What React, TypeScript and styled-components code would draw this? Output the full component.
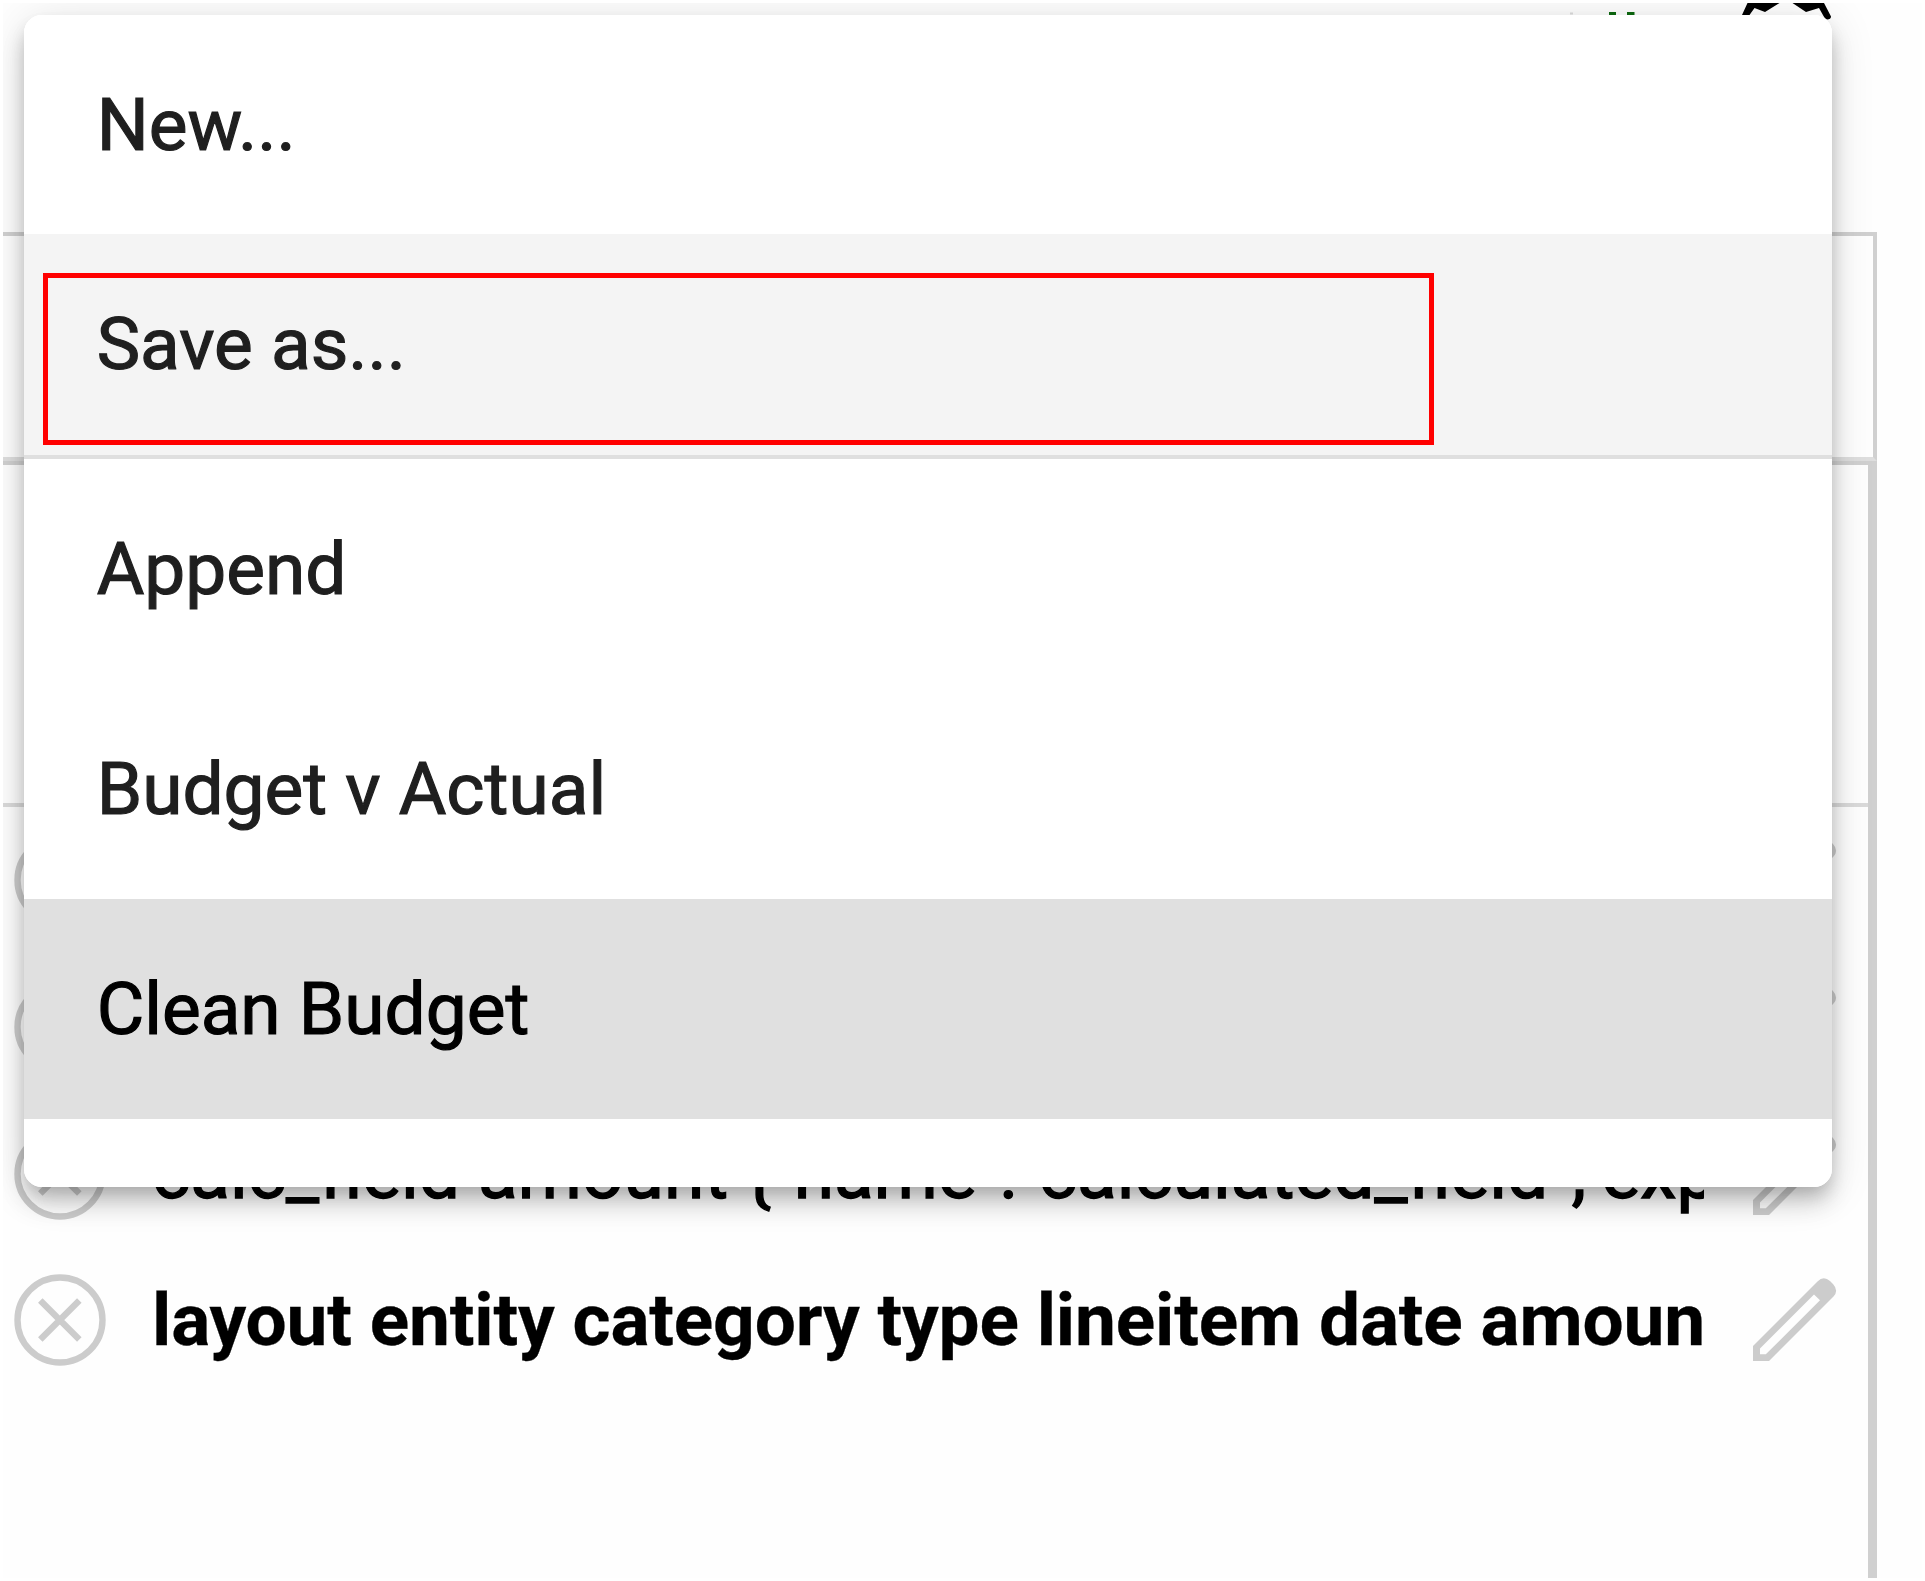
import React from 'react';
import styled, { createGlobalStyle } from 'styled-components';

const GlobalStyle = createGlobalStyle`
  *, *::before, *::after { box-sizing: border-box; }
  body {
    margin: 0;
    background: #fff;
    font-family: Roboto, sans-serif;
    font-size: 73px;
    color: #000;
  }
`;

const Page = styled.main`
  position: relative;
  width: 1925px;
  height: 1581px;
  padding: 3px;
  overflow: hidden;
`;

const Viewport = styled.div`
  position: relative;
  display: flex;
  flex-direction: column;
  height: 1575px;
  background: #fefefe;
  overflow: hidden;
`;

const TopBar = styled.header`
  display: flex;
  justify-content: flex-end;
  align-items: flex-start;
  height: 229px;
  padding-right: 88px;
`;

const ToolbarArt = styled.svg`
  display: block;
`;

const SelectBox = styled.div`
  width: 1874px;
  height: 229px;
  border: solid #d0d0d0;
  border-width: 4px 4px 4px 0;
  border-bottom-color: #dedede;
`;

const Panel = styled.section`
  flex: 1;
  width: 1874px;
  border: solid #d0d0d0;
  border-width: 4px 9px 0 0;
`;

const PanelHeader = styled.div`
  height: 342px;
  border-bottom: 4px solid #dadada;
`;

const StepList = styled.ul`
  display: flex;
  flex-direction: column;
  margin: 0;
  padding: 0 0 0 11px;
  list-style: none;
`;

const Step = styled.li`
  display: flex;
  align-items: center;
  height: 146.67px;
`;

const StepText = styled.span<{ $bold?: boolean }>`
  width: 1552px;
  margin: 0 48px 0 46px;
  overflow: hidden;
  white-space: nowrap;
  line-height: 91px;
  font-weight: ${p => (p.$bold ? 700 : 400)};
  letter-spacing: ${p => (p.$bold ? '-0.17px' : '0.04px')};
  -webkit-text-stroke: ${p => (p.$bold ? '0.3px' : '1.4px')} #000;
`;

const StepIcon = styled.svg`
  flex: none;
  display: block;
`;

const Menu = styled.div`
  position: absolute;
  left: 20.7px;
  top: 12px;
  width: 1808px;
  height: 1172px;
  border-radius: 18px;
  background: #fff;
  overflow: hidden;
`;

const MenuShadow = styled(Menu)`
  overflow: visible;
  box-shadow:
    0 9px 18px -5px rgba(0, 0, 0, 0.2),
    0 18px 23px 0 rgba(0, 0, 0, 0.14),
    0 5px 46px 0 rgba(0, 0, 0, 0.12);
`;

const MenuItem = styled.div<{ $tone?: 'hover' | 'selected'; $divider?: boolean }>`
  height: ${p => (p.$divider ? 224.4 : 220)}px;
  padding-left: 73px;
  line-height: 221px;
  white-space: nowrap;
  color: ${p => (p.$tone === 'selected' ? '#000' : '#1f1f1f')};
  -webkit-text-stroke: 1.2px currentColor;
  background: ${p => (p.$tone === 'hover' ? '#f4f4f4' : p.$tone === 'selected' ? '#e0e0e0' : '#fff')};
  border-bottom: ${p => (p.$divider ? '4px solid #dfdfdf' : '0')};
  &:first-child {
    height: 219.3px;
    line-height: 220px;
  }
`;

const Highlight = styled.div`
  position: absolute;
  left: 40px;
  top: 270px;
  width: 1391px;
  height: 172px;
  border: 5px solid #f00;
`;

const RemoveIcon = () => (
  <StepIcon width="92" height="92" viewBox="0 0 92 92" fill="none" stroke="#ccc" strokeWidth="6.4">
    <circle cx="46" cy="46" r="42.5" />
    <path d="M26.3 26.5 65.3 65.5M65.3 26.5 26.3 65.5" />
  </StepIcon>
);

const EditIcon = () => (
  <StepIcon width="85" height="84" viewBox="0 0 85 84">
    <path
      fill="#ccc"
      fillRule="evenodd"
      d="M1 68 65.5 3.5Q71.5-2.5 78 3L81 6Q87 12.500 81.500 18.500L17 83H1ZM8 70.500V76.300H13.800L68 22.300L62 16.500Z"
    />
  </StepIcon>
);

const steps = [
  { text: '' },
  { text: '' },
  { text: 'calc_field amount {"name":"calculated_field","exp' },
  { text: 'layout entity category type lineitem date amoun', bold: true },
];

export default function App() {
  return (
    <Page>
      <GlobalStyle />
      <Viewport>
        <TopBar>
          <ToolbarArt width="267" height="18" viewBox="1567 3 267 18">
            <path d="M1570 13.500h3" stroke="#ddd" strokeWidth="2" />
            <path d="M1609 13.500h7M1627 13.500h7.500" stroke="#0f6a12" strokeWidth="3" />
            <path
              d="M1742 15 1747.500 3H1779.500L1765 12 1754.500 8 1749.500 15Z"
            />
            <path
              d="M1792.500 3H1824L1831 16.500Q1831 19.500 1827 19.500 1825 19 1823.500 16L1819 8 1806 12Z"
            />
          </ToolbarArt>
        </TopBar>
        <SelectBox />
        <Panel>
          <PanelHeader />
          <StepList>
            {steps.map((step, i) => (
              <Step key={i}>
                <RemoveIcon />
                <StepText $bold={step.bold}>{step.text}</StepText>
                <EditIcon />
              </Step>
            ))}
          </StepList>
        </Panel>
        <MenuShadow />
        <Menu>
          <MenuItem>New...</MenuItem>
          <MenuItem $tone="hover" $divider>Save as...</MenuItem>
          <MenuItem>Append</MenuItem>
          <MenuItem>Budget v Actual</MenuItem>
          <MenuItem $tone="selected">Clean Budget</MenuItem>
        </Menu>
        <Highlight />
      </Viewport>
    </Page>
  );
}
